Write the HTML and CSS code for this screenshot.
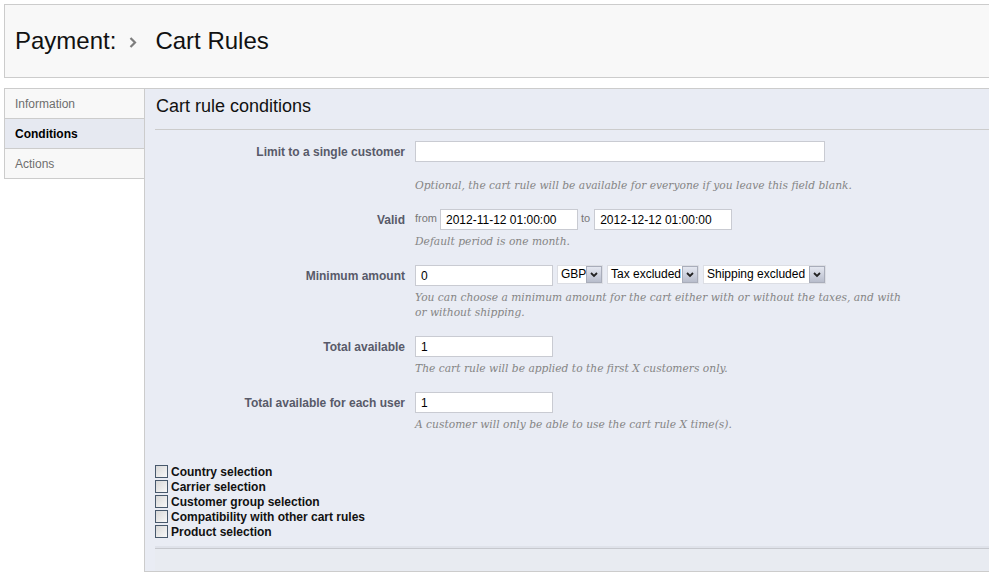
FILE: index.html
```html
<!DOCTYPE html>
<html>
<head>
<meta charset="utf-8">
<title>Cart Rules</title>
<link rel="stylesheet" href="styles.css">
</head>
<body>
<div class="page">
  <div class="toolbar">
    <h2 class="page-title">Payment:<svg class="crumb" width="8" height="11" viewBox="0 0 8 11"><polyline points="1.5,1 6,5.5 1.5,10" fill="none" stroke="#7d7d7d" stroke-width="2.2"/></svg>Cart Rules</h2>
  </div>
  <div class="content">
    <ul class="tabs">
      <li class="tab">Information</li>
      <li class="tab active">Conditions</li>
      <li class="tab">Actions</li>
    </ul>
    <div class="panel">
      <h3 class="panel-title">Cart rule conditions</h3>
      <div class="form">
        <div class="row">
          <label class="label">Limit to a single customer</label>
          <div class="field">
            <div class="controls"><span class="input wide"></span></div>
            <p class="help first">Optional, the cart rule will be available for everyone if you leave this field blank.</p>
          </div>
        </div>
        <div class="row">
          <label class="label">Valid</label>
          <div class="field">
            <div class="controls">
              <span class="tiny">from</span><span class="input date">2012-11-12 01:00:00</span>
              <span class="tiny to">to</span><span class="input date">2012-12-12 01:00:00</span>
            </div>
            <p class="help">Default period is one month.</p>
          </div>
        </div>
        <div class="row">
          <label class="label">Minimum amount</label>
          <div class="field">
            <div class="controls">
              <span class="input small">0</span>
              <span class="select sel-gbp"><span class="sel-text">GBP</span><span class="sel-btn"><svg width="8" height="6" viewBox="0 0 8 6"><polyline points="1,1 4,4 7,1" fill="none" stroke="#222" stroke-width="1.8"/></svg></span></span>
              <span class="select sel-tax"><span class="sel-text">Tax excluded</span><span class="sel-btn"><svg width="8" height="6" viewBox="0 0 8 6"><polyline points="1,1 4,4 7,1" fill="none" stroke="#222" stroke-width="1.8"/></svg></span></span>
              <span class="select sel-ship"><span class="sel-text">Shipping excluded</span><span class="sel-btn"><svg width="8" height="6" viewBox="0 0 8 6"><polyline points="1,1 4,4 7,1" fill="none" stroke="#222" stroke-width="1.8"/></svg></span></span>
            </div>
            <p class="help wrap">You can choose a minimum amount for the cart either with or without the taxes, and with or without shipping.</p>
          </div>
        </div>
        <div class="row">
          <label class="label">Total available</label>
          <div class="field">
            <div class="controls"><span class="input small">1</span></div>
            <p class="help">The cart rule will be applied to the first X customers only.</p>
          </div>
        </div>
        <div class="row">
          <label class="label">Total available for each user</label>
          <div class="field">
            <div class="controls"><span class="input small">1</span></div>
            <p class="help">A customer will only be able to use the cart rule X time(s).</p>
          </div>
        </div>
      </div>
      <ul class="checks">
        <li class="check"><span class="box"></span>Country selection</li>
        <li class="check"><span class="box"></span>Carrier selection</li>
        <li class="check"><span class="box"></span>Customer group selection</li>
        <li class="check"><span class="box"></span>Compatibility with other cart rules</li>
        <li class="check"><span class="box"></span>Product selection</li>
      </ul>
      <div class="panel-footer"></div>
    </div>
  </div>
</div>
</body>
</html>
```
FILE: styles.css
```css
html, body {
  margin: 0;
  padding: 0;
  overflow: hidden;
  background: #ffffff;
}
body {
  padding: 4px 0 0 4px;
  font-family: "Liberation Sans", Arial, sans-serif;
  font-size: 12px;
  color: #000;
}
.page {
  width: 1010px;
}
.toolbar {
  height: 72px;
  background: #f8f8f8;
  border: 1px solid #cccccc;
  display: flex;
  align-items: center;
  padding-left: 10px;
}
.page-title {
  margin: 0;
  font-size: 24px;
  font-weight: normal;
  color: #111;
  display: flex;
  align-items: center;
}
.crumb {
  margin: 2px 18px 0 13px;
}
.content {
  margin-top: 10px;
  display: flex;
  align-items: flex-start;
}
.tabs {
  list-style: none;
  margin: 0;
  padding: 0;
  width: 140px;
  flex: none;
  border-top: 1px solid #cccccc;
}
.tab {
  height: 29px;
  line-height: 30px;
  padding-left: 10px;
  border-left: 1px solid #cccccc;
  border-bottom: 1px solid #cccccc;
  background: #f8f8f8;
  color: #6e6e6e;
}
.tab.active {
  background: #e6e9f1;
  color: #000;
  font-weight: bold;
}
.panel {
  flex: 1;
  background: #e9ecf4;
  border: 1px solid #cccccc;
}
.panel-title {
  margin: 0 0 0 10px;
  padding-left: 1px;
  height: 40px;
  line-height: 35px;
  font-size: 18px;
  font-weight: normal;
  color: #111;
  border-bottom: 1px solid #cccccc;
}
.form {
  margin-top: 11px;
  padding-left: 10px;
}
.row {
  display: flex;
  gap: 10px;
  margin-bottom: 16px;
}
.label {
  width: 250px;
  flex: none;
  text-align: right;
  font-weight: bold;
  color: #585a69;
  line-height: 22px;
}
.field {
  display: flex;
  flex-direction: column;
}
.controls {
  display: flex;
  align-items: flex-start;
  height: 21px;
}
.input {
  box-sizing: border-box;
  height: 21px;
  background: #fff;
  border: 1px solid #c9cbd2;
  padding: 0 5px;
  line-height: 21px;
  font-size: 12px;
  color: #000;
  white-space: nowrap;
}
.input.wide { width: 410px; }
.input.small { width: 138px; }
.input.date { width: 138px; }
.tiny {
  font-size: 11px;
  color: #777;
  line-height: 19px;
  margin-right: 3px;
}
.tiny.to {
  margin-left: 3px;
  margin-right: 4px;
}
.select {
  box-sizing: border-box;
  height: 19px;
  margin-left: 4px;
  display: flex;
  background: #fff;
  border: 1px solid #dcdee4;
}
.sel-gbp { width: 46px; }
.sel-tax { width: 92px; }
.sel-ship { width: 123px; }
.sel-text {
  flex: 1;
  padding-left: 3px;
  line-height: 17px;
  font-size: 12px;
  white-space: nowrap;
  overflow: hidden;
}
.sel-btn {
  box-sizing: border-box;
  width: 16px;
  height: 17px;
  background: linear-gradient(#e4e7f0, #b8bdcc);
  border: 1px solid #a9adba;
  display: flex;
  align-items: center;
  justify-content: center;
}
.help {
  margin: 4px 0 0 0;
  font-family: "DejaVu Serif", "Liberation Serif", serif;
  font-style: italic;
  font-size: 10.7px;
  line-height: 15px;
  color: #858585;
}
.help.first {
  margin-top: 16px;
}
.help.wrap {
  width: 494px;
}
.checks {
  list-style: none;
  margin: 32px 0 0 0;
  padding: 0 0 0 10px;
}
.check {
  display: flex;
  align-items: center;
  height: 15px;
  font-weight: bold;
  color: #111;
}
.box {
  box-sizing: border-box;
  width: 13px;
  height: 13px;
  margin-right: 3px;
  border: 1px solid #47586c;
  background: linear-gradient(135deg, #d8d8d8, #f8f8f8);
}
.panel-footer {
  margin: 9px 0 0 10px;
  height: 22px;
  border-top: 1px solid #c6c8ce;
  box-shadow: 0 -2px 0 #dfe2ea;
  background: #e8ebf1;
}
```
